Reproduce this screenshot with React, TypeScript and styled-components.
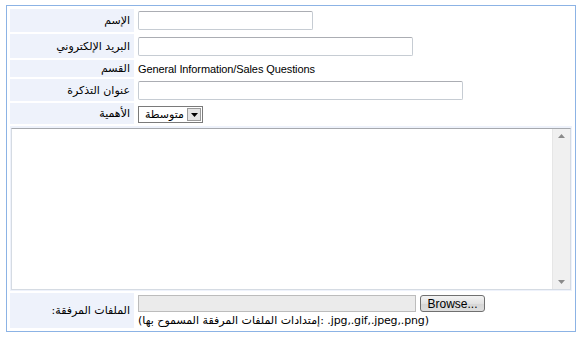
import React from 'react'
import styled, { createGlobalStyle } from 'styled-components'

const GlobalStyle = createGlobalStyle`
  body {
    margin: 0;
    background: #ffffff;
    font-family: "Liberation Sans", "DejaVu Sans", sans-serif;
    font-size: 11px;
    color: #000000;
  }
`

const Frame = styled.div`
  box-sizing: border-box;
  width: 570px;
  height: 327px;
  margin: 5px 0 0 6px;
  border: 1px solid #8cb3e5;
  padding: 3px;
`

const FormGrid = styled.div`
  display: grid;
  grid-template-columns: 124px 1fr;
  grid-template-rows: 23px 24px 17px 22px 21px 165px 35px;
  column-gap: 3px;
  row-gap: 2px;
`

const Label = styled.div`
  background: #eef2fb;
  display: flex;
  align-items: center;
  justify-content: flex-end;
  padding-right: 4px;
  font-family: "DejaVu Sans", sans-serif;
  font-size: 11px;
  white-space: nowrap;
`

const Field = styled.div`
  display: flex;
  align-items: center;
  padding-left: 1px;
`

const TextInput = styled.input<{ $w: number }>`
  box-sizing: border-box;
  width: ${(p) => p.$w}px;
  height: 19px;
  border: 1px solid #c6ccd3;
  border-top-color: #abadb3;
  border-radius: 2px;
  padding: 0 3px;
  font: inherit;
  outline: none;
`

const StaticText = styled.span`
  font-family: "Liberation Sans", sans-serif;
  font-size: 11px;
  letter-spacing: -0.1px;
`

const SelectWrap = styled.div`
  display: inline-flex;
  box-sizing: border-box;
  width: 65px;
  height: 17px;
  border: 1px solid #7a7a7a;
  background: #ffffff;
  margin-top: 2px;
`

const NativeSelect = styled.select`
  appearance: none;
  flex: 1;
  min-width: 0;
  border: none;
  background: transparent;
  font-family: "DejaVu Sans", sans-serif;
  font-size: 11px;
  padding: 0 2px;
  outline: none;
  direction: rtl;
`

const ArrowBtn = styled.span`
  width: 14px;
  margin: 1px;
  background: #e4e4e4;
  border: 1px solid #9a9a9a;
  box-sizing: border-box;
  display: flex;
  align-items: center;
  justify-content: center;
`

const MessageCell = styled.div`
  grid-column: 1 / span 2;
  background: #eef2fb;
  padding: 2px 1px 1px 1px;
  display: flex;
`

const TextBox = styled.div`
  flex: 1;
  display: flex;
  border: 1px solid #d5dbe3;
  border-top-color: #a6a9ae;
  background: #ffffff;
`

const Area = styled.textarea`
  flex: 1;
  border: none;
  resize: none;
  outline: none;
  overflow: hidden;
  font: inherit;
  padding: 2px;
`

const ScrollTrack = styled.div`
  width: 17px;
  background: #f0f0f0;
  border-left: 1px solid #e6e6e6;
  display: flex;
  flex-direction: column;
  justify-content: space-between;
  align-items: center;
  padding: 5px 0;
`

const FileField = styled.div`
  display: flex;
  flex-direction: column;
  padding-left: 1px;
  padding-top: 1px;
`

const FileLine = styled.div`
  display: flex;
  align-items: center;
  gap: 4px;
`

const FilePath = styled.div`
  box-sizing: border-box;
  width: 278px;
  height: 17px;
  background: #ebebeb;
  border: 1px solid #bcbcbc;
`

const BrowseButton = styled.button`
  box-sizing: border-box;
  width: 65px;
  height: 17px;
  margin-top: 1px;
  border: 1px solid #707070;
  border-radius: 3px;
  background: linear-gradient(#f3f3f3, #e2e2e2 50%, #d6d6d6 51%, #dedede);
  font-family: "Liberation Sans", sans-serif;
  font-size: 12px;
  padding: 0;
  line-height: 14px;
  color: #000;
`

const Hint = styled.div`
  font-family: "DejaVu Sans", sans-serif;
  font-size: 11px;
  letter-spacing: -0.15px;
  margin-top: 2px;
  white-space: nowrap;
`

const Triangle = ({ up, color }: { up?: boolean; color: string }) => (
  <svg width="7" height="4" viewBox="0 0 7 4">
    <polygon points={up ? '0,4 7,4 3.5,0' : '0,0 7,0 3.5,4'} fill={color} />
  </svg>
)

export default function App() {
  return (
    <>
      <GlobalStyle />
      <Frame>
        <FormGrid>
          <Label>الإسم</Label>
          <Field>
            <TextInput $w={175} />
          </Field>

          <Label>البريد الإلكتروني</Label>
          <Field>
            <TextInput $w={275} />
          </Field>

          <Label>القسم</Label>
          <Field>
            <StaticText>General Information/Sales Questions</StaticText>
          </Field>

          <Label>عنوان التذكرة</Label>
          <Field>
            <TextInput $w={325} />
          </Field>

          <Label>الأهمية</Label>
          <Field>
            <SelectWrap>
              <NativeSelect defaultValue="mid">
                <option value="low">منخفضة</option>
                <option value="mid">متوسطة</option>
                <option value="high">عالية</option>
              </NativeSelect>
              <ArrowBtn>
                <Triangle color="#000" />
              </ArrowBtn>
            </SelectWrap>
          </Field>

          <MessageCell>
            <TextBox>
              <Area />
              <ScrollTrack>
                <Triangle up color="#8a8a8a" />
                <Triangle color="#8a8a8a" />
              </ScrollTrack>
            </TextBox>
          </MessageCell>

          <Label>:الملفات المرفقة</Label>
          <FileField>
            <FileLine>
              <FilePath />
              <BrowseButton>Browse...</BrowseButton>
            </FileLine>
            <Hint>(إمتدادات الملفات المرفقة المسموح بها: .jpg,.gif,.jpeg,.png)</Hint>
          </FileField>
        </FormGrid>
      </Frame>
    </>
  )
}
